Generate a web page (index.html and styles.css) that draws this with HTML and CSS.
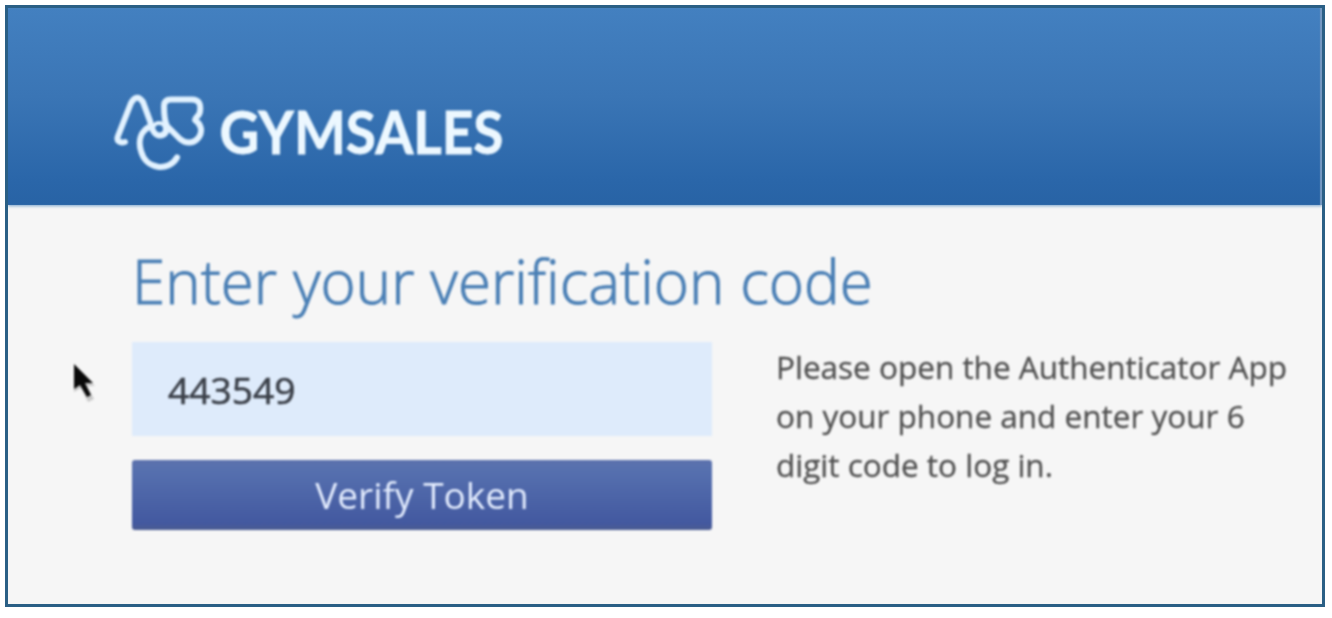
FILE: index.html
```
<!DOCTYPE html>
<html lang="en">
<head>
<meta charset="utf-8">
<title>GymSales</title>
<link rel="stylesheet" href="styles.css">
</head>
<body>
<div class="frame">
  <header class="header">
    <svg class="logo" viewBox="0 0 440 90" role="img" aria-label="GymSales">
      <path class="mark" d="M13 54C8 55.500 4 53 6 48L19 15Q25 5 31 14L38 33Q41 48 48 47.500Q55 47 55 38Q52 32 52 18Q52 11.500 59 11.500H80C87 11.500 89 16 88 23C88 28 83 29 83 32C89 36 91 43 87 49C82 56 74 56 68 51L55 38"/>
      <path class="mark" d="M39 38C28 43 26 53 29 63C34 82 57 84 65 69.500"/>
      <circle class="hub" cx="47" cy="41" r="6"/>
      <text class="wordmark" x="107.500" y="65.500" textLength="284" lengthAdjust="spacingAndGlyphs">GYMSALES</text>
    </svg>
  </header>
  <main class="content">
    <h1 class="title">Enter your verification code</h1>
    <div class="columns">
      <form class="form">
        <div class="code">443549</div>
        <div class="verify">Verify Token</div>
      </form>
      <p class="help">Please open the Authenticator App<br>on your phone and enter your 6<br>digit code to log in.</p>
    </div>
  </main>
  <svg class="pointer" viewBox="0 0 40 50">
    <path class="pointer-shadow" d="M7 7L7 33L14 29L21 43L27 40L20 27H28Z"/>
    <path class="pointer-arrow" d="M7 5V30L13 26L20 38L24 36L18 24H26Z"/>
  </svg>
</div>
</body>
</html>
```

FILE: styles.css
```
* { box-sizing: border-box; }
body {
  margin: 0;
  padding: 5px 0 0 5px;
  height: 618px;
  overflow: hidden;
  background: #fff;
  font-family: "Open Sans", "Noto Sans", sans-serif;
}
.frame {
  position: relative;
  width: 1320px;
  height: 602px;
  border: 3px solid #2a5f85;
  background: #f6f6f6;
  overflow: hidden;
}
.header {
  height: 197px;
  padding: 80px 0 0 104px;
  background: linear-gradient(#4380c0, #3a75b5 45%, #2a66a9 88%, #2863a5);
  box-shadow: inset -2px 0 1px #7699c2, 0 1px 3px #79a3cc;
}
.logo {
  display: block;
  width: 440px;
  height: 90px;
  filter: blur(1px);
}
.mark, .hub {
  fill: none;
  stroke: #e2f2ff;
  stroke-width: 6;
  stroke-linecap: round;
  stroke-linejoin: round;
}
.hub { stroke-width: 4; }
.wordmark {
  fill: #edf8ff;
  font: 700 60px Lato, sans-serif;
  stroke: #edf8ff;
  stroke-width: 0.8;
}
.content { padding: 38px 0 0 124px; }
.title {
  margin: 0;
  height: 99px;
  font-size: 60px;
  letter-spacing: 0.06px;
  line-height: 77px;
  font-weight: 300;
  color: #4a7fb5;
  -webkit-text-stroke: 0.9px #4a7fb5;
  white-space: nowrap;
  filter: blur(1px);
}
.columns {
  display: flex;
  gap: 64px;
}
.form { width: 580px; }
.code {
  height: 94px;
  padding-left: 36px;
  background: #deebfb;
  color: #3b4049;
  font-size: 37.200px;
  line-height: 96px;
  -webkit-text-stroke: 0.6px #3b4049;
  filter: blur(1px);
}
.verify {
  height: 70px;
  margin-top: 24px;
  border-radius: 3px;
  background: linear-gradient(#5c72ad, #5670af 15%, #4359a0 90%, #4b5c91);
  color: #e2ebfd;
  font-size: 37px;
  line-height: 70px;
  text-align: center;
  filter: blur(1px);
}
.help {
  margin: 0;
  color: #505050;
  font-size: 31.500px;
  line-height: 49px;
  -webkit-text-stroke: 0.3px #505050;
  white-space: nowrap;
  filter: blur(1.1px);
}
.pointer {
  position: absolute;
  left: 59px;
  top: 351px;
  width: 40px;
  height: 50px;
  filter: blur(1.3px);
}
.pointer-shadow { fill: #c9c9c9; }
.pointer-arrow { fill: #090909; }
```
